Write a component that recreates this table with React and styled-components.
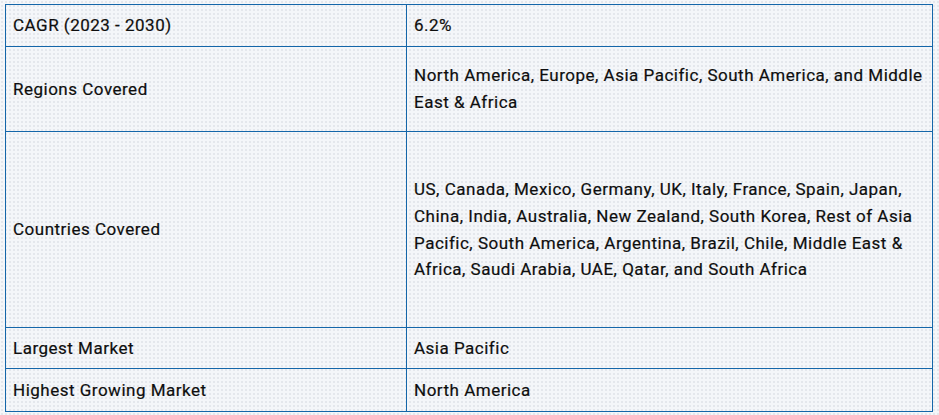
import React from "react";
import styled, { createGlobalStyle } from "styled-components";

const Global = createGlobalStyle`
  html, body {
    margin: 0;
    padding: 0;
    background-color: #f4f6f9;
    background-image: radial-gradient(circle, #e4e7ec 0.8px, transparent 1px);
    background-size: 4px 4px;
  }
  body {
    font-family: Roboto, "Liberation Sans", Arial, sans-serif;
  }
`;

const Page = styled.div`
  padding: 4px 6px 0 5px;
`;

const Table = styled.table`
  width: 928px;
  border-collapse: collapse;
  border: 1px solid #1466a9;
  font-size: 17px;
  font-weight: 400;
  letter-spacing: 0.5px;
  line-height: 26.6px;
  color: #0e0e0e;
  -webkit-text-stroke: 0.2px #0e0e0e;
`;

const Row = styled.tr`
  height: ${(p) => p.$h}px;
`;

const Cell = styled.td`
  border: 1px solid #1466a9;
  padding: 0 7px;
  vertical-align: middle;
  width: ${(p) => (p.$label ? "386px" : "auto")};
`;

const rows = [
  { label: "CAGR (2023 - 2030)", value: "6.2%", h: 42 },
  {
    label: "Regions Covered",
    value:
      "North America, Europe, Asia Pacific, South America, and Middle East & Africa",
    h: 85,
  },
  {
    label: "Countries Covered",
    value:
      "US, Canada, Mexico, Germany, UK, Italy, France, Spain, Japan, China, India, Australia, New Zealand, South Korea, Rest of Asia Pacific, South America, Argentina, Brazil, Chile, Middle East & Africa, Saudi Arabia, UAE, Qatar, and South Africa",
    h: 196,
  },
  { label: "Largest Market", value: "Asia Pacific", h: 41 },
  { label: "Highest Growing Market", value: "North America", h: 43 },
];

export default function App() {
  return (
    <>
      <Global />
      <Page>
        <Table>
          <tbody>
            {rows.map((r) => (
              <Row key={r.label} $h={r.h}>
                <Cell $label>{r.label}</Cell>
                <Cell>{r.value}</Cell>
              </Row>
            ))}
          </tbody>
        </Table>
      </Page>
    </>
  );
}
